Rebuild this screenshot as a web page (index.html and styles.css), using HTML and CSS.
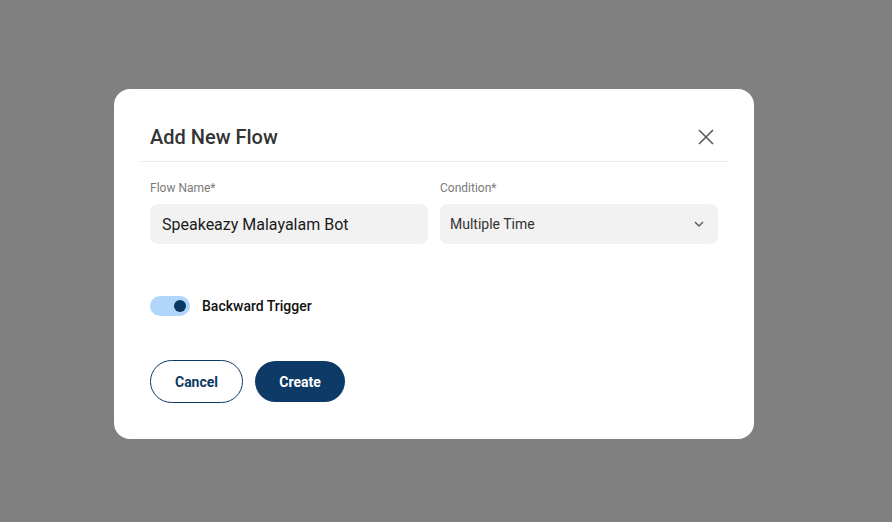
FILE: index.html
```html
<!DOCTYPE html>
<html lang="en">
<head>
<meta charset="utf-8">
<title>Add New Flow</title>
<link rel="stylesheet" href="styles.css">
</head>
<body>
<div class="overlay">
  <div class="modal">
    <div class="modal-header">
      <h2 class="title">Add New Flow</h2>
      <button class="close" aria-label="Close">
        <svg width="16" height="16" viewBox="0 0 16 16"><path d="M1 1L15 15M15 1L1 15" stroke="#5a5a5a" stroke-width="1.6" fill="none"/></svg>
      </button>
    </div>
    <div class="fields">
      <div class="field">
        <label class="label">Flow Name*</label>
        <div class="input">Speakeazy Malayalam Bot</div>
      </div>
      <div class="field">
        <label class="label">Condition*</label>
        <div class="input select">
          <span>Multiple Time</span>
          <svg width="10" height="6" viewBox="0 0 10 6"><path d="M1 1L5 5L9 1" stroke="#555" stroke-width="1.4" fill="none"/></svg>
        </div>
      </div>
    </div>
    <div class="toggle-row">
      <span class="toggle"><span class="knob"></span></span>
      <span class="toggle-label">Backward Trigger</span>
    </div>
    <div class="actions">
      <button class="btn btn-outline">Cancel</button>
      <button class="btn btn-primary">Create</button>
    </div>
  </div>
</div>
</body>
</html>
```
FILE: styles.css
```css
* { box-sizing: border-box; }
html, body { margin: 0; height: 100%; }
body {
  background: #808080;
  font-family: Roboto, "Noto Sans", Arial, sans-serif;
}
.overlay {
  padding: 89px 0 0 114px;
}
.modal {
  width: 640px;
  height: 350px;
  background: #fff;
  border-radius: 16px;
  padding: 36px 36px 36px;
}
.modal-header {
  display: flex;
  align-items: center;
  justify-content: space-between;
  margin: 0 -10px;
  padding: 0 10px 12px;
  border-bottom: 1px solid #ececec;
}
.title {
  margin: 0;
  font-size: 20px;
  line-height: 24px;
  font-weight: 500;
  color: #333;
}
.close {
  width: 24px;
  height: 24px;
  padding: 0;
  border: 0;
  background: none;
  display: flex;
  align-items: center;
  justify-content: center;
}
.fields {
  display: flex;
  gap: 12px;
  margin-top: 18px;
}
.field {
  flex: 1;
  display: flex;
  flex-direction: column;
}
.label {
  font-size: 12px;
  line-height: 16px;
  color: #7a7a7a;
  margin-bottom: 8px;
}
.input {
  height: 40px;
  background: #f2f2f2;
  border-radius: 8px;
  padding: 0 12px;
  display: flex;
  align-items: center;
  font-size: 16px;
  color: #1a1a1a;
}
.select {
  justify-content: space-between;
  padding: 0 14px 0 10px;
  font-size: 14px;
  color: #333;
}
.toggle-row {
  display: flex;
  align-items: center;
  gap: 12px;
  margin-top: 52px;
}
.toggle {
  width: 40px;
  height: 20px;
  border-radius: 10px;
  background: #b1d6fb;
  display: flex;
  align-items: center;
  justify-content: flex-end;
  padding-right: 4px;
}
.knob {
  width: 12px;
  height: 12px;
  border-radius: 50%;
  background: #0c3963;
}
.toggle-label {
  font-size: 14px;
  font-weight: 500;
  color: #111;
}
.actions {
  display: flex;
  gap: 12px;
  margin-top: 44px;
}
.btn {
  height: 43px;
  border-radius: 22px;
  font-family: inherit;
  font-size: 14px;
  font-weight: 700;
  cursor: pointer;
}
.btn-outline {
  width: 93px;
  background: #fff;
  border: 1px solid #0d3a64;
  color: #0d3a64;
}
.btn-primary {
  width: 90px;
  height: 41px;
  margin-top: 1px;
  background: #0d3a66;
  border: 0;
  color: #fff;
}
```
